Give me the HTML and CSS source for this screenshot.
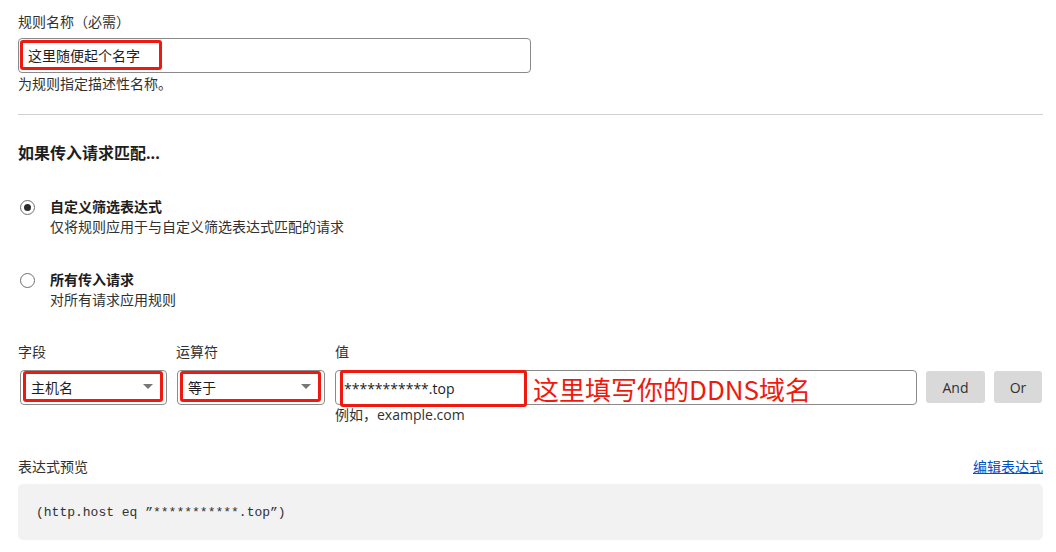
FILE: index.html
```html
<!DOCTYPE html>
<html lang="zh">
<head>
<meta charset="utf-8">
<link rel="stylesheet" href="styles.css">
</head>
<body>
<div class="page">
  <section class="name-field">
    <div class="label">规则名称（必需）</div>
    <div class="text-input">
      <span class="mark mark-name">这里随便起个名字</span>
    </div>
    <div class="help">为规则指定描述性名称。</div>
  </section>

  <hr class="divider">

  <h2 class="heading">如果传入请求匹配...</h2>

  <div class="radio-row first">
    <span class="radio checked"></span>
    <div class="radio-text">
      <div class="radio-title">自定义筛选表达式</div>
      <div class="radio-desc">仅将规则应用于与自定义筛选表达式匹配的请求</div>
    </div>
  </div>

  <div class="radio-row second">
    <span class="radio"></span>
    <div class="radio-text">
      <div class="radio-title">所有传入请求</div>
      <div class="radio-desc">对所有请求应用规则</div>
    </div>
  </div>

  <div class="builder">
    <div class="col col-field">
      <div class="label">字段</div>
      <div class="select">
        <div class="mark select-inner"><span>主机名</span><span class="caret"></span></div>
      </div>
    </div>
    <div class="col col-op">
      <div class="label">运算符</div>
      <div class="select">
        <div class="mark select-inner"><span>等于</span><span class="caret"></span></div>
      </div>
    </div>
    <div class="col col-value">
      <div class="label">值</div>
      <div class="value-row">
        <div class="value-input">
          <span class="mark mark-value">***********.top</span>
          <span class="note">这里填写你的DDNS域名</span>
        </div>
        <button class="btn btn-and">And</button>
        <button class="btn btn-or">Or</button>
      </div>
      <div class="example">例如，example.com</div>
    </div>
  </div>

  <div class="preview-head">
    <div class="label">表达式预览</div>
    <a class="edit-link" href="#">编辑表达式</a>
  </div>
  <div class="preview">(http.host eq ”***********.top”)</div>
</div>
</body>
</html>
```

FILE: styles.css
```css
* { box-sizing: border-box; }
html, body { margin: 0; padding: 0; background: #fff; }
body {
  font-family: "Open Sans", "Noto Sans CJK SC", sans-serif;
  font-size: 14px;
  color: #313131;
}
.page {
  padding: 12px 13px 0 18px;
}
.label {
  line-height: 20px;
  color: #313131;
}
.text-input {
  margin-top: 6px;
  width: 513px;
  height: 35px;
  border: 1px solid #8a8a8a;
  border-radius: 4px;
  padding: 1px 0 0 1px;
  display: flex;
  align-items: flex-start;
}
.mark {
  border: 3px solid #f0190f;
  border-radius: 3px;
}
.mark-name {
  display: flex;
  align-items: center;
  width: 142px;
  height: 30px;
  padding-left: 5px;
  color: #1d1d1d;
}
.help {
  line-height: 20px;
  margin-top: 1px;
}
.divider {
  margin: 20px 0 0 0;
  border: 0;
  border-top: 1px solid #d0d0d0;
}
.heading {
  margin: 26px 0 0 0;
  font-size: 16px;
  line-height: 24px;
  font-weight: 700;
  color: #1d1d1d;
}
.radio-row {
  display: flex;
  align-items: flex-start;
}
.radio-row.first { margin-top: 32px; }
.radio-row.second { margin-top: 33px; }
.radio {
  width: 15px;
  height: 15px;
  border: 1px solid #6f6f6f;
  border-radius: 50%;
  margin: 3px 15px 0 2px;
  display: flex;
  align-items: center;
  justify-content: center;
  flex: none;
}
.radio.checked::after {
  content: "";
  width: 7px;
  height: 7px;
  border-radius: 50%;
  background: #2b2b2b;
}
.radio-title {
  font-weight: 700;
  line-height: 20px;
  color: #1d1d1d;
}
.radio-desc {
  line-height: 20px;
}
.builder {
  display: flex;
  margin-top: 32px;
}
.col-field { width: 158px; }
.col-op { width: 159px; }
.col-value { flex: 1; }
.col .label { margin-bottom: 8px; }
.select {
  margin-left: 1px;
  width: 148px;
  height: 35px;
  border: 1px solid #8a8a8a;
  border-radius: 4px;
  padding: 0 3px 2px 2px;
}
.col-field .select { margin-left: 2px; width: 147px; }
.select-inner {
  height: 31px;
  display: flex;
  align-items: center;
  justify-content: space-between;
  padding: 0 7px 0 5px;
  color: #1d1d1d;
}
.caret {
  width: 0;
  height: 0;
  border-left: 5px solid transparent;
  border-right: 5px solid transparent;
  border-top: 5px solid #777;
}
.value-row {
  display: flex;
  align-items: flex-start;
}
.value-input {
  width: 582px;
  height: 35px;
  border: 1px solid #8a8a8a;
  border-radius: 4px;
  display: flex;
  align-items: center;
  padding-left: 4px;
}
.mark-value {
  width: 187px;
  height: 37px;
  margin: 1px 0 -1px 0;
  display: flex;
  align-items: center;
  padding-left: 1px;
  color: #1d1d1d;
  font-size: 14px;
}
.note {
  margin-left: 6px;
  color: #f0190f;
  font-size: 26px;
  line-height: 30px;
  font-family: "Noto Sans CJK SC", "Open Sans", sans-serif;
  margin-top: 2px;
}
.btn {
  height: 32px;
  margin-top: 1px;
  border: 0;
  border-radius: 3px;
  background: #d9d9d9;
  color: #313131;
  font-family: "Open Sans", sans-serif;
  font-size: 14px;
  padding: 0;
}
.btn-and { width: 59px; margin-left: 9px; }
.btn-or { width: 48px; margin-left: 9px; }
.example {
  line-height: 20px;
  margin-top: 0;
}
.preview-head {
  display: flex;
  justify-content: space-between;
  align-items: center;
  margin-top: 32px;
}
.edit-link {
  color: #0051c3;
  text-decoration: underline;
  line-height: 20px;
}
.preview {
  margin-top: 7px;
  height: 56px;
  background: #f2f2f2;
  border-radius: 5px;
  padding-left: 18px;
  display: flex;
  align-items: center;
  font-family: "Liberation Mono", monospace;
  font-size: 13px;
  color: #313131;
}
```
